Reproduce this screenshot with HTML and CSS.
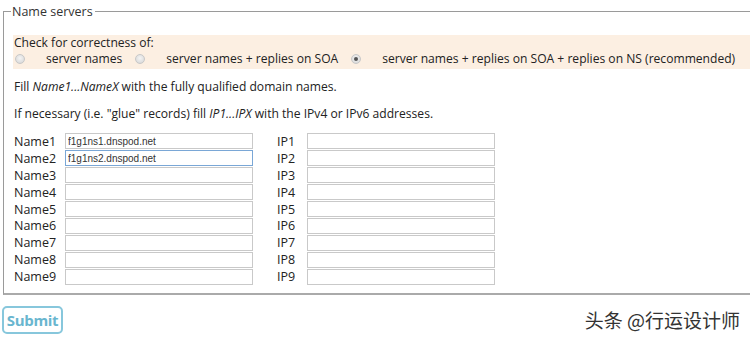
FILE: index.html
```html
<!DOCTYPE html>
<html lang="en">
<head>
  <meta charset="UTF-8">
  <title>Name servers</title>
  <link rel="stylesheet" href="styles.css">
</head>
<body>

  <form class="ns-form">
    <fieldset class="ns-box">
      <legend>Name servers</legend>

      <div class="check">
        <div class="check-title">Check for correctness of:</div>
        <div class="check-opts">
          <label><input type="radio" name="level"> server names</label>
          <label><input type="radio" name="level"> server names + replies on SOA</label>
          <label><input type="radio" name="level" checked> server names + replies on SOA + replies on NS (recommended)</label>
        </div>
      </div>

      <p class="hint">Fill <i>Name1...NameX</i> with the fully qualified domain names.</p>
      <p class="hint">If necessary (i.e. "glue" records) fill <i>IP1...IPX</i> with the IPv4 or IPv6 addresses.</p>

      <div class="servers">
        <label>Name1</label><input class="field" value="f1g1ns1.dnspod.net"><label>IP1</label><input class="field">
        <label>Name2</label><input class="field focus" value="f1g1ns2.dnspod.net"><label>IP2</label><input class="field">
        <label>Name3</label><input class="field"><label>IP3</label><input class="field">
        <label>Name4</label><input class="field"><label>IP4</label><input class="field">
        <label>Name5</label><input class="field"><label>IP5</label><input class="field">
        <label>Name6</label><input class="field"><label>IP6</label><input class="field">
        <label>Name7</label><input class="field"><label>IP7</label><input class="field">
        <label>Name8</label><input class="field"><label>IP8</label><input class="field">
        <label>Name9</label><input class="field"><label>IP9</label><input class="field">
      </div>
    </fieldset>

    <div class="footer">
      <button type="submit" class="submit">Submit</button>
      <span class="mark">头条 @行运设计师</span>
    </div>
  </form>

</body>
</html>
```

FILE: styles.css
```css
body {
  margin: 0;
  font-family: "Open Sans", Arial, sans-serif;
  font-size: 12.1px;
  color: #222;
  background: #fff;
  overflow: hidden;
}

.ns-box {
  box-sizing: border-box;
  margin: 3px 0 0 3px;
  width: calc(100% - 3px);
  min-width: 0;
  padding: 0 0 8px 9px;
  border: 1px solid #9a9a9a;
  border-right: none;
  border-bottom: 2px solid #aaa;
}

.ns-box legend {
  padding: 0 2px 0 1px;
  margin-left: -2px;
  font-size: 12.5px;
  color: #333;
}

.check {
  margin-top: 15px;
  background: #fcefe2;
  padding: 0 0 2px 1px;
  line-height: 16px;
}

.check-opts {
  display: flex;
  gap: 13px;
  padding-left: 1px;
  white-space: nowrap;
}

.check-opts label {
  display: flex;
  align-items: center;
  gap: 21px;
}

.check-opts input {
  appearance: none;
  margin: 0;
  width: 10px;
  height: 10px;
  border-radius: 50%;
  border: 1px solid #c8c8c8;
  background: radial-gradient(circle at 50% 40%, #f4f4f4, #d4d4d4);
  position: relative;
}

.check-opts input:checked::after {
  content: "";
  position: absolute;
  left: 2px;
  top: 2px;
  width: 4px;
  height: 4px;
  border-radius: 50%;
  background: #555;
}

.hint {
  margin: 10px 0 0 1px;
  line-height: 15px;
}

.hint + .hint {
  margin-top: 12px;
}

.servers {
  display: grid;
  grid-template-columns: 52px 188px 54px 188px;
  grid-auto-rows: 16.9px;
  margin-top: 12px;
  align-items: center;
}

.servers label {
  line-height: 15px;
  padding-left: 1px;
  font-size: 12.5px;
}

.servers label:nth-child(4n+3) {
  padding-left: 24px;
}

.field {
  box-sizing: border-box;
  height: 16px;
  width: 188px;
  border: 1px solid #c9c9c9;
  padding: 0 2px;
  font-family: Arial, "Liberation Sans", sans-serif;
  font-size: 10px;
  color: #333;
  outline: none;
}

.field.focus {
  border-color: #7aa7d6;
}

.footer {
  display: flex;
  justify-content: space-between;
  align-items: center;
  margin-top: 11px;
}

.submit {
  margin-left: 2px;
  width: 61px;
  height: 28px;
  border: 2px solid #87c7dc;
  border-radius: 5px;
  background: #fff;
  color: #69b6cf;
  font-family: "Open Sans", Arial, sans-serif;
  font-weight: bold;
  font-size: 15px;
  letter-spacing: -0.3px;
  padding: 0;
}

.mark {
  margin-right: 10px;
  font-family: "Noto Sans CJK SC", sans-serif;
  font-size: 19px;
  line-height: 24px;
  color: #333;
}
```
